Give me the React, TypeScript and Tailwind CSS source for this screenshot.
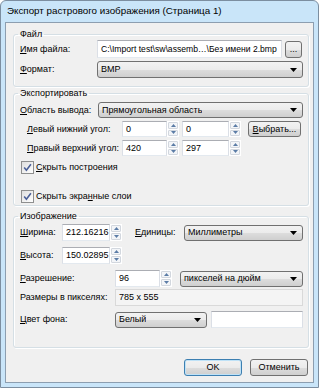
import React from "react";

const combo =
  "flex items-center justify-between rounded-[3px] border border-[#707070] bg-[linear-gradient(#f2f2f2,#ebebeb_50%,#dddddd_50%,#cfcfcf)] pl-[3px] pr-[5px]";
const field =
  "flex items-center overflow-hidden whitespace-nowrap border border-[#abadb3] border-x-[#dbdfe6] border-b-[#e3e9ef] bg-white px-[3px]";
const button =
  "flex items-center justify-center rounded-[3px] border border-[#707070] bg-[linear-gradient(#f2f2f2,#ebebeb_50%,#dddddd_50%,#cfcfcf)]";

function U({ children }: { children: React.ReactNode }) {
  return <span className="underline underline-offset-[1px]">{children}</span>;
}

function Arrow() {
  return (
    <svg width="7" height="4" viewBox="0 0 7 4" className="shrink-0">
      <path d="M0 0h7L3.5 4z" fill="#000" />
    </svg>
  );
}

function Combo({ value, className = "" }: { value: string; className?: string }) {
  return (
    <div className={`${combo} ${className}`}>
      <span className="truncate">{value}</span>
      <Arrow />
    </div>
  );
}

function Spinner() {
  return (
    <div className="flex h-full w-[12px] shrink-0 flex-col gap-px bg-white p-px">
      <div className="flex flex-1 items-center justify-center rounded-[1px] border border-[#d2d7de] bg-[#f3f5f8]">
        <svg width="5" height="3" viewBox="0 0 5 3">
          <path d="M0 3h5L2.5 0z" fill="#5b7ca6" />
        </svg>
      </div>
      <div className="flex flex-1 items-center justify-center rounded-[1px] border border-[#d2d7de] bg-[#f3f5f8]">
        <svg width="5" height="3" viewBox="0 0 5 3">
          <path d="M0 0h5L2.5 3z" fill="#5b7ca6" />
        </svg>
      </div>
    </div>
  );
}

function Check({ children }: { children: React.ReactNode }) {
  return (
    <div className="ml-px flex items-center gap-[2px]">
      <div className="flex h-[13px] w-[13px] items-center justify-center border border-[#8e8f8f] bg-linear-to-br from-[#dedede] to-white">
        <svg width="9" height="9" viewBox="0 0 9 9">
          <path d="M1.2 4.6l2.2 2.6L7.9 1.3" stroke="#4a5f97" strokeWidth="1.6" fill="none" />
        </svg>
      </div>
      <span>{children}</span>
    </div>
  );
}

function Group({ title, className = "", children }: { title: string; className?: string; children: React.ReactNode }) {
  return (
    <fieldset
      className={`rounded-[3px] border border-[#d5dfe5] pl-[6px] pr-[5px] shadow-[inset_1px_1px_0_#fff,1px_1px_0_#fff] ${className}`}
    >
      <legend className="-ml-[2px] px-[2px] leading-[12px]">{title}</legend>
      {children}
    </fieldset>
  );
}

export default function App() {
  return (
    <div className="h-[388px] w-[319px] bg-white font-['Liberation_Sans',Arial,sans-serif] text-black">
      <div className="flex h-[388px] w-[319px] flex-col rounded-t-[6px] border border-[#7c8ea0] bg-[#c9e5f9]">
        <div className="flex h-[21px] items-center pl-[6px] text-[9.8px]">
          Экспорт растрового изображения (Страница 1)
        </div>

        <div className="mx-[4px] mb-[4px] flex flex-1 flex-col border border-[#8c9eb0] bg-[#f0f0f0] pl-[7px] pr-[4px] text-[9px] leading-[11px]">
          {/* File */}
          <Group title="Файл" className="mt-[5px] pb-[8px]">
            <div className="flex h-[18px] items-center">
              <span className="w-[77px] shrink-0">
                <U>И</U>мя файла:
              </span>
              <div className={`${field} h-[18px] w-[185px] text-[8.6px]`}>C:\Import test\sw\assemb…\Без имени 2.bmp</div>
              <div className={`${button} ml-[3px] h-[17px] w-[17px] leading-[8px]`}>...</div>
            </div>
            <div className="mt-[3px] flex h-[17px] items-center">
              <span className="w-[77px] shrink-0">
                <U>Ф</U>ормат:
              </span>
              <Combo value="BMP" className="h-[17px] flex-1" />
            </div>
          </Group>

          {/* Export */}
          <Group title="Экспортировать" className="pb-[2px]">
            <div className="mt-[3px] flex h-[16px] items-center">
              <span className="w-[78px] shrink-0">
                <U>О</U>бласть вывода:
              </span>
              <Combo value="Прямоугольная область" className="h-[16px] flex-1" />
            </div>
            <div className="mt-[3px] flex h-[16px] items-center pl-[7px]">
              <span className="w-[95px] shrink-0">
                <U>Л</U>евый нижний угол:
              </span>
              <div className={`${field} h-[16px] w-[45px]`}>0</div>
              <Spinner />
              <div className={`${field} ml-[3px] h-[16px] w-[47px]`}>0</div>
              <Spinner />
              <div className={`${button} ml-[7px] h-[16px] w-[53px]`}>
                <span>
                  <U>В</U>ыбрать...
                </span>
              </div>
            </div>
            <div className="mt-[3px] flex h-[16px] items-center pl-[7px]">
              <span className="w-[95px] shrink-0">
                <U>П</U>равый верхний угол:
              </span>
              <div className={`${field} h-[16px] w-[45px]`}>420</div>
              <Spinner />
              <div className={`${field} ml-[3px] h-[16px] w-[47px]`}>297</div>
              <Spinner />
            </div>
            <div className="mt-[5px]">
              <Check>
                <U>С</U>крыть построения
              </Check>
            </div>
            <div className="mt-[16px]">
              <Check>
                Скрыть экра<U>н</U>ные слои
              </Check>
            </div>
          </Group>

          {/* Image */}
          <Group title="Изображение" className="mt-[4px] pb-[19px]">
            <div className="mt-[2px] flex h-[17px] items-center">
              <span className="w-[42px] shrink-0">
                <U>Ш</U>ирина:
              </span>
              <div className={`${field} h-[17px] w-[48px]`}>212.16216</div>
              <Spinner />
              <span className="ml-[13px] w-[49px] shrink-0">
                <U>Е</U>диницы:
              </span>
              <Combo value="Миллиметры" className="h-[16px] flex-1" />
            </div>
            <div className="mt-[6px] flex h-[17px] items-center">
              <span className="w-[42px] shrink-0">
                <U>В</U>ысота:
              </span>
              <div className={`${field} h-[17px] w-[48px]`}>150.02895</div>
              <Spinner />
            </div>
            <div className="mt-[6px] flex h-[17px] items-center">
              <span className="w-[95px] shrink-0">
                <U>Р</U>азрешение:
              </span>
              <div className={`${field} h-[17px] w-[45px]`}>96</div>
              <Spinner />
              <Combo value="пикселей на дюйм" className="ml-[8px] h-[16px] flex-1" />
            </div>
            <div className="mt-[2px] flex h-[17px] items-center">
              <span className="w-[95px] shrink-0">Размеры в пикселях:</span>
              <div className="flex h-[17px] flex-1 items-center border border-[#d9d9d9] bg-[#f4f4f4] px-[3px]">
                785 x 555
              </div>
            </div>
            <div className="mt-[5px] flex h-[17px] items-center">
              <span className="w-[95px] shrink-0">
                <U>Ц</U>вет фона:
              </span>
              <Combo value="Белый" className="h-[16px] w-[92px]" />
              <div className={`${field} ml-[4px] h-[17px] flex-1`} />
            </div>
          </Group>

          {/* Buttons */}
          <div className="mr-px mt-[11px] flex justify-end gap-[8px]">
            <div className="flex h-[17px] w-[58px] items-center justify-center rounded-[3px] border border-[#3c7fb1] bg-[linear-gradient(#f2f2f2,#ebebeb_50%,#dddddd_50%,#cfcfcf)] shadow-[inset_0_0_0_1px_#bfe2f7]">
              OK
            </div>
            <div className={`${button} h-[17px] w-[58px]`}>Отменить</div>
          </div>
        </div>
      </div>
    </div>
  );
}
